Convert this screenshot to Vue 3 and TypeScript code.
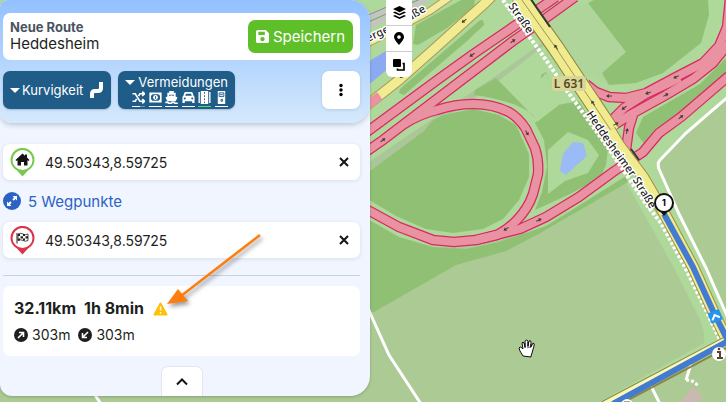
<script setup lang="ts">
import { ref } from 'vue'

interface Avoidance {
  name: string
  icon: string
  active: boolean
}

interface Waypoint {
  id: string
  label: string
  kind: 'start' | 'finish'
  coords: string
}

const avoidances: Avoidance[] = [
  { name: 'shuffle', icon: 'M0 3h3l5 8h4M0 11h3l1.500-2.500M6.500 5.500l1.500-2.500h4M10.500 .8l2.500 2.200-2.500 2.200M10.500 8.800l2.500 2.200-2.500 2.200', active: false },
  { name: 'toll', icon: 'M.8 2.500h11.400v9H.8zM3 2.500L.8 4.700M10 2.500l2.200 2.200M3 11.500L.8 9.300M10 11.500l2.200-2.200', active: false },
  { name: 'ferry', icon: 'M0 12.800q1.600-1.600 3.200 0t3.300 0 3.300 0 3.200 0', active: false },
  { name: 'car', icon: '', active: false },
  { name: 'road', icon: '', active: true },
  { name: 'station', icon: '', active: false },
]

const waypoints = ref<Waypoint[]>([
  { id: 'start', label: 'Start', kind: 'start', coords: '49.50343,8.59725' },
  { id: 'finish', label: 'Ziel', kind: 'finish', coords: '49.50343,8.59725' },
])

const motorways: string[] = [
  'M360 137L440 78 472 55 510 29 556 -3',
  'M360 156L383 140 450 89 513 41 546 18 575 -3',
  'M404 124Q420 114 437 110Q455 104 473 104Q493 104 509 112Q519 118 526 129L535 148Q539 160 538 174L533 194Q528 209 516 221Q508 229 497 235L476 240 454 242 433 240 399 227 366 209',
  'M476 240L520 229 546 217 579 197 613 172 643 152 659 133 681 117 730 75',
  'M586 84L596 92 609 97 626 98 646 93 676 77 703 63 719 46 727 27 730 -2',
  'M603 129L624 108 646 94 680 78',
  'M606 130L630 115 666 95 693 79 713 63 730 42',
  'M633 115L629 128 626 150',
]

const footway = 'M503 0L546 60 568 92 586 117 609 149 646 204 661 223 685 267 706 310 720 340'
const mainRoad = 'M519 -4L546 34 556 48 596 108 612 132'
const mainRoadSouth = 'M610 130L619 145 643 177 664 213 693 267 713 311 727 340'

// x, y and heading of each one-way arrow
const arrows: number[][] = [
  [472, 55, 145], [513, 41, -35], [383, 140, -36], [464, 21, 142], [402, 76, 140],
  [556, 47, 236], [593, 103, 236], [609, 96, 182], [648, 93, 160], [676, 77, 154],
  [624, 108, 145], [616, 124, -28], [666, 95, -28], [681, 117, -38], [627, 131, -80],
  [506, 229, 148], [539, 220, -24], [527, 133, 60],
]
</script>

<template>
  <main class="page">
    <svg class="map" viewBox="0 0 726 402" preserveAspectRatio="xMinYMin slice" role="img" aria-label="Karte">
      <rect width="726" height="402" fill="#abca94" />
      <path d="M0 0H726V97L686 133 658 162 663 178 728 318V345L599 402 704 343Q705 330 699 318L674 268 626 182 546 231 366 260H0Z" fill="#afd89b" />
      <path d="M726 96L686 133 658 162 662 176 706 268 726 313Z" fill="#abca94" />
      <path d="M546 60V20L589 3 626 52 602 73 609 85 560 60Z" fill="#b0d59b" />
      <path d="M366 164L500 73 546 40V44L500 80 366 174Z" fill="#abc79a" />

      <g fill="#90c074">
        <path d="M366 174L424 131 432 121 443 115 473 109 499 115 516 125 529 154 529 177 519 200 503 219 483 229 453 233 426 229 396 216 366 198Z" />
        <path d="M366 218L399 237 433 247 466 249 499 242 546 226 580 205 626 176 628 182 546 230 506 251 456 265 374 312 366 312Z" />
        <path d="M596 -1H708L709 15 701 43 663 73 636 83 609 85 602 73 626 52 588 3Z" />
        <path d="M496 78L537 120Q531 110 510 103Q491 97 474 95L475 90Z" />
        <path d="M399 93L400 89 479 21Q484 18 484 25L467 41 404 95Z" />
        <path d="M413 44L416 25 443 10 463 -1H475L474 7 447 28 418 45Z" />
        <path d="M546 72L558 105 579 101 608 149 606 165 600 178 570 194 535 210 542 192 547 166 544 140 535 123 543 114 541 75Z" />
        <path d="M726 58L700 84 643 117 636 133 645 145 655 134 690 103 726 72Z" />
      </g>
      <path d="M548 150L568 132 588 140 599 155 588 173 565 181 548 194Z" fill="#afd89b" />
      <path d="M537 122L559 105 546 73 524 98Z" fill="#afd89b" />
      <path d="M573 142L583 143 587 156 566 175 560 171 563 154Z" fill="#9abbf5" />
      <path d="M366 63L396 45V62L366 87Z" fill="#8caaf2" />

      <g fill="none">
        <path d="M366 19L399 4 415 -3M366 27L399 13 432 -3" stroke="#c6c4c2" stroke-width="5" />
        <path d="M366 16L410 -3M366 23L425 -3" stroke="#8d8b90" stroke-width="1" />
        <path d="M366 44L400 27 430 11 450 -3" stroke="#b39b58" stroke-width="8" />
        <path d="M366 44L400 27 430 11 450 -3" stroke="#f1ed9e" stroke-width="6" />
        <path d="M366 106L399 80 433 50 464 22 484 4 492 -4" stroke="#ad9751" stroke-width="11" />
        <path d="M366 106L399 80 433 50 464 22 484 4 492 -4" stroke="#f1ec91" stroke-width="9" />
        <path d="M366 106L380 96" stroke="#e892a2" stroke-width="9" />
        <path v-for="(d, i) in motorways" :key="'casing' + i" :d="d" stroke="#d92864" stroke-width="10.500" />
        <path v-for="(d, i) in motorways" :key="'fill' + i" :d="d" stroke="#e993a2" stroke-width="8" />

        <path d="M730 95L686 133 660 160Q657 163 659 169L663 178 679 214 706 268 728 318M366 302L370 313 389 355 421 404M93 392L101 404M691 364L686 380M651 386L660 404" stroke="#fff" stroke-width="3" />
        <path :d="footway" stroke="#fff" stroke-width="4" stroke-dasharray="3 2" />
        <path :d="mainRoad" stroke="#8d813d" stroke-width="17" />
        <path :d="mainRoad" stroke="#f1eb8f" stroke-width="15" />
        <path :d="mainRoad" stroke="#a1954d" stroke-width="1" />
        <path d="M530 -2L550 27" stroke="#37372f" stroke-width="2" />
        <path :d="mainRoadSouth" stroke="#a08e45" stroke-width="12" />
        <path :d="mainRoadSouth" stroke="#f1eb8f" stroke-width="10" />
        <path d="M631 149L639 160" stroke="#37372f" stroke-width="2" />
        <path d="M603 404L728 338" stroke="#8b873e" stroke-width="6" />
        <path d="M603 404L728 338" stroke="#f8f8bd" stroke-width="4" />
        <path d="M613 408L730 346" stroke="#8b873e" stroke-width="2" />
        <path d="M664 214L693 267 713 311 728 341 613 404" stroke="#437bd0" stroke-width="6" />
        <path d="M686 380Q694 380 698 386" stroke="#fff" stroke-width="3" stroke-dasharray="3 2" />
      </g>

      <g v-for="(a, i) in arrows" :key="'arrow' + i" :transform="`translate(${a[0]} ${a[1]}) rotate(${a[2]})`">
        <path d="M-3 0H2" stroke="#4b3b33" stroke-width="1" />
        <path d="M3 0L0 -2V2Z" fill="#4b3b33" />
      </g>

      <path d="M681 402L693 386 703 397 698 402Z" fill="#cbb8b0" />

      <g class="map-label">
        <path id="road-north" d="M508 6L540 51" fill="none" />
        <path id="road-south" d="M586 114L609 148 632 179 662 228" fill="none" />
        <path id="road-west" d="M362 45L400 27 450 -3" fill="none" />
        <text><textPath href="#road-north">Straße</textPath></text>
        <text><textPath href="#road-south">Heddesheimer Straße</textPath></text>
        <text><textPath href="#road-west">berger Straße</textPath></text>
      </g>
      <rect x="552" y="76" width="34" height="15" rx="3" fill="#d9d69a" />
      <text class="road-number" x="569" y="88">L 631</text>

      <g transform="translate(715 316) rotate(-22)">
        <rect x="-6" y="-5" width="12" height="11" fill="#2095f2" />
        <path d="M-4 3L0 -1 4 3" fill="none" stroke="#fff" stroke-width="2" />
      </g>
      <circle cx="719" cy="354" r="7" fill="#fff" />
      <path d="M717 352h3v6m-3 0h6" fill="none" stroke="#5c4035" stroke-width="2" />
      <circle cx="719" cy="349" r="1.300" fill="#5c4035" />
      <circle cx="627" cy="405" r="6" fill="#fff" />
      <path d="M624 402h6" stroke="#5c4035" stroke-width="1" />

      <path d="M664 216L659 210H669Z" fill="#111" />
      <circle cx="664" cy="203" r="9" fill="#fff" stroke="#111" stroke-width="2" />
      <text class="marker-number" x="664" y="206">1</text>

      <path d="M523 356l-3-5-1-3q1-2 3 0l1 1-1-6q1-2 2 0l1 4V341q2-2 3 0v5l1-5q2-1 2 1v5l2-4q2 0 1 3l-2 7-1 3v1Z" fill="#fff" stroke="#111" stroke-width="1" stroke-linejoin="round" />
      <path d="M525 343v5M528 342v6M531 344l-1 4" stroke="#111" stroke-width="1" />
    </svg>

    <div class="overlay">
      <section class="panel">
        <header class="head">
          <div class="title-card">
            <div class="title">
              <strong>Neue Route</strong>
              <span>Heddesheim</span>
            </div>
            <button class="save" type="button">
              <svg width="13" height="13" viewBox="0 0 14 14" aria-hidden="true">
                <path fill-rule="evenodd" d="M2 0h8.500L14 3.500V12q0 2-2 2H2q-2 0-2-2V2q0-2 2-2ZM2.500 2v3.500h7V2ZM7 7.500a2.300 2.300 0 1 0 .01 0Z" fill="#fff" />
              </svg>
              Speichern
            </button>
          </div>
          <div class="tools">
            <button class="tool curves" type="button">
              <span class="caret"></span>
              <span>Kurvigkeit</span>
              <svg width="14" height="18" viewBox="0 0 14 18" aria-hidden="true">
                <path d="M2 17V13Q2 10 5 10H8Q11 10 11 7V1" fill="none" stroke="#fff" stroke-width="4" />
              </svg>
            </button>
            <button class="tool avoid" type="button">
              <span class="avoid-title"><span class="caret"></span>Vermeidungen</span>
              <span class="avoid-icons">
                <span v-for="a in avoidances" :key="a.name" class="avoid-item" :class="{ active: a.active, half: a.name === 'shuffle' }">
                  <svg width="13" height="13" viewBox="0 0 13 14" aria-hidden="true">
                    <path v-if="a.icon" :d="a.icon" fill="none" stroke="#fff" stroke-width="1.800" />
                    <template v-if="a.name === 'toll'">
                      <circle cx="6.500" cy="7" r="2.600" fill="#fff" />
                      <path d="M6.500 5.500v3" stroke="#1f5c87" />
                    </template>
                    <path v-else-if="a.name === 'ferry'" d="M4 0h5v2h2v4l2 1-2 4H2L0 7l2-1V2h2ZM4 4v1.500L6.500 4.500 9 5.500V4Z" fill="#fff" fill-rule="evenodd" />
                    <path v-else-if="a.name === 'car'" d="M3.500 1h6q1 0 1.500 1l1 3q1 .5 1 2v6h-2.500v-2h-8v2H0V7q0-1.500 1-2l1-3q.5-1 1.500-1ZM3.800 3L3 5.200h7L9.200 3ZM2.500 7a1 1 0 1 0 .01 0ZM10.500 7a1 1 0 1 0 .01 0Z" fill="#fff" fill-rule="evenodd" />
                    <g v-else-if="a.name === 'road'">
                      <path d="M0 1h1.500v12H0ZM2.500 0h8v14h-8ZM11.500 1H13v12h-1.500Z" fill="#fff" />
                      <path d="M6.500 1v12" stroke="#1f5c87" stroke-dasharray="2 1.500" />
                    </g>
                    <g v-else-if="a.name === 'station'">
                      <path d="M2.500 0h8v14h-8Z" fill="#fff" />
                      <path d="M4 2h5v4H4ZM5 4h3M6 9h1.500v2H6Z" fill="none" stroke="#1f5c87" />
                    </g>
                  </svg>
                </span>
              </span>
            </button>
            <button class="more" type="button" aria-label="Mehr">
              <svg width="6" height="14" viewBox="0 0 6 14" aria-hidden="true">
                <circle cx="3" cy="2.500" r="1.700" /><circle cx="3" cy="7" r="1.700" /><circle cx="3" cy="11.500" r="1.700" />
              </svg>
            </button>
          </div>
        </header>

        <div class="body">
          <template v-for="(w, i) in waypoints" :key="w.id">
            <div class="waypoint">
              <svg width="25" height="29" viewBox="0 0 25 29" aria-hidden="true">
                <path d="M12.500 28.500L7 22.500A12 12 0 1 1 18 22.500Z" :fill="w.kind === 'start' ? '#79c84f' : '#dc3449'" />
                <circle cx="12.500" cy="12" r="10" fill="#fff" />
                <path v-if="w.kind === 'start'" d="M12.500 5.500L15 7.700V6.500H17V9.500L19.500 12 18.500 13 17.500 12.200V17.500H14V14H11V17.500H7.500V12.200L6.500 13 5.500 12Z" fill="#151515" />
                <g v-else>
                  <path d="M7 7V17.500" stroke="#222" stroke-width="1" />
                  <path d="M8 8Q11 6.500 13 8T18 8V14.500Q15 16 13 14.500T8 14.500Z" fill="#fff" stroke="#222" stroke-width="0.800" />
                  <path d="M8 8h2v2H8ZM13 8h2v2H13ZM10.500 10.200H13V12.500h-2.500ZM15.500 10.200H18V12.500h-2.500ZM8 12.500h2v2H8ZM13 12.500h2v2H13Z" fill="#222" />
                </g>
              </svg>
              <input v-model="w.coords" type="text" :aria-label="w.label" />
              <button class="remove" type="button" :aria-label="w.label + ' entfernen'">
                <svg width="10" height="10" viewBox="0 0 10 10" aria-hidden="true">
                  <path d="M1 1L9 9M9 1L1 9" fill="none" stroke="#151515" stroke-width="2" />
                </svg>
              </button>
            </div>
            <button v-if="i === 0" class="expand" type="button">
              <svg width="18" height="18" viewBox="0 0 18 18" aria-hidden="true">
                <circle cx="9" cy="9" r="9" fill="#2c62c4" />
                <path d="M9.500 4H14V8.500L12.500 7 10.800 8.700 9.300 7.200 11 5.500ZM8.500 14H4V9.500L5.500 11 7.200 9.300 8.700 10.800 7 12.500Z" fill="#fff" />
              </svg>
              5 Wegpunkte
            </button>
          </template>

          <hr />

          <div class="summary">
            <div class="totals">
              <strong>32.11km</strong>
              <strong>1h 8min</strong>
              <svg class="warning" width="15" height="14" viewBox="0 0 15 14" aria-hidden="true">
                <path d="M7.500 1.500L13.500 12.500H1.500Z" fill="#ffc107" stroke="#ffc107" stroke-width="2" stroke-linejoin="round" />
                <path d="M7.500 4.500V8.500M7.500 10V11.500" stroke="#fff" stroke-width="1.500" />
              </svg>
            </div>
            <div class="climbs">
              <span class="climb">
                <svg width="14" height="14" viewBox="0 0 14 14" aria-hidden="true">
                  <circle cx="7" cy="7" r="7" fill="#1d1f21" />
                  <path d="M4 10L9.500 4.500M5 4.500H9.500V9" fill="none" stroke="#fff" stroke-width="1.600" />
                </svg>
                303m
              </span>
              <span class="climb">
                <svg width="14" height="14" viewBox="0 0 14 14" aria-hidden="true">
                  <circle cx="7" cy="7" r="7" fill="#1d1f21" />
                  <path d="M10 4L4.500 9.500M4.500 5V9.500H9" fill="none" stroke="#fff" stroke-width="1.600" />
                </svg>
                303m
              </span>
            </div>
          </div>

          <button class="collapse" type="button" aria-label="Einklappen">
            <svg width="12" height="8" viewBox="0 0 12 8" aria-hidden="true">
              <path d="M1 6.500L6 1.500 11 6.500" fill="none" stroke="#151515" stroke-width="2" />
            </svg>
          </button>
        </div>
      </section>

      <nav class="controls" aria-label="Kartenwerkzeuge">
        <button type="button" aria-label="Ebenen">
          <svg width="13" height="13" viewBox="0 0 14 14" aria-hidden="true">
            <path d="M7 0L14 3.300 7 6.600 0 3.300ZM0 7L2 6 7 8.300 12 6 14 7 7 10.300ZM0 10.700L2 9.700 7 12 12 9.700 14 10.700 7 14Z" />
          </svg>
        </button>
        <button type="button" aria-label="Wegpunkt">
          <svg width="10" height="13" viewBox="0 0 10 13" aria-hidden="true">
            <path fill-rule="evenodd" d="M5 0A5 5 0 0 1 10 5Q10 7.500 5 13Q0 7.500 0 5A5 5 0 0 1 5 0ZM5 3.200A1.800 1.800 0 1 0 5.010 3.200Z" />
          </svg>
        </button>
        <button type="button" aria-label="Kopieren">
          <svg width="12" height="12" viewBox="0 0 12 12" aria-hidden="true">
            <rect width="8" height="8" rx="1" />
            <path d="M9.500 4.500H11V11H4.500V9.500" fill="none" stroke="#000" stroke-width="1.700" />
          </svg>
        </button>
      </nav>
    </div>

    <svg class="pointer" width="106" height="84" viewBox="0 0 106 84" aria-hidden="true">
      <path d="M96 5L17 66" stroke="#ff7d0c" stroke-width="2.500" />
      <path d="M3 74L14 59 18 64 24 71Z" fill="#ff7d0c" />
    </svg>
  </main>
</template>

<style>
body {
  margin: 0;
}
</style>

<style scoped>
.page {
  position: relative;
  display: grid;
  min-height: 100vh;
  overflow: hidden;
  font-family: Inter, "Liberation Sans", sans-serif;
  color: #1d1f21;
}

button,
input {
  box-sizing: border-box;
  margin: 0;
  padding: 0;
  border: 0;
  background: none;
  font: inherit;
  color: inherit;
}

button {
  display: flex;
  align-items: center;
  justify-content: center;
  cursor: pointer;
}

svg {
  flex: none;
}

.map {
  position: absolute;
  inset: 0;
  width: 100%;
  height: 100%;
}

.map-label {
  font: 500 11px "Noto Sans", sans-serif;
  fill: #222;
  stroke: #fff;
  stroke-width: 3px;
  stroke-linejoin: round;
  paint-order: stroke;
}

.map-label path {
  stroke: none;
}

.road-number {
  font: 600 12px "Noto Sans", sans-serif;
  fill: #544a1c;
  text-anchor: middle;
}

.marker-number {
  font: 700 9px Inter, sans-serif;
  text-anchor: middle;
}

.overlay {
  position: relative;
  display: flex;
  align-items: flex-start;
  gap: 16px;
}

.panel {
  flex: 0 1 370px;
  overflow: hidden;
  border-radius: 20px;
  border-top-left-radius: 8px;
  border-bottom-left-radius: 12px;
  background: #f0f5ff;
  box-shadow: 0 1px 3px rgba(0, 0, 0, 0.2);
}

.head {
  display: flex;
  flex-direction: column;
  gap: 11px;
  padding: 13px 10px 14px 3px;
  border-radius: 0 0 20px 12px;
  background: linear-gradient(#92c1ff, #d5e9fc);
  box-shadow: 0 2px 5px rgba(40, 60, 90, 0.25);
}

.title-card {
  display: flex;
  align-items: center;
  justify-content: space-between;
  padding: 7px;
  border-radius: 7px;
  background: #fff;
}

.title {
  display: flex;
  flex-direction: column;
  font-size: 15px;
  line-height: 18px;
}

.title strong {
  font-size: 13px;
  line-height: 15px;
  color: #4a5360;
}

.save {
  gap: 4px;
  height: 33px;
  padding: 0 8px;
  border-radius: 7px;
  background: #5ebf29;
  color: #fff;
  font-size: 15px;
}

.tools {
  display: flex;
  gap: 7px;
}

.tool {
  height: 38px;
  border-radius: 7px;
  background: #1f5c87;
  box-shadow: 0 1px 2px rgba(0, 0, 0, 0.2);
  color: #fff;
  font-size: 13px;
}

.curves {
  gap: 2px;
  padding: 0 7px;
}

.curves svg {
  margin-left: 5px;
}

.avoid {
  flex-direction: column;
  padding: 0 7px;
}

.avoid-title {
  display: flex;
  align-items: center;
  gap: 3px;
  line-height: 17px;
}

.caret {
  border: 5px solid transparent;
  border-top-color: #fff;
  border-bottom-width: 0;
}

.avoid-icons {
  display: flex;
  align-self: stretch;
  justify-content: space-between;
  padding-left: 7px;
}

.avoid-item {
  display: flex;
  padding-bottom: 2px;
  border-bottom: 1px solid #fff;
}

.avoid-item.active {
  border-color: #45df69;
}

.avoid-item.half {
  border-image: linear-gradient(90deg, #fff 60%, #6f96b2 60%) 1;
}

.more {
  width: 38px;
  height: 38px;
  margin-left: auto;
  border-radius: 7px;
  background: #fff;
  box-shadow: 0 1px 3px rgba(40, 60, 90, 0.15);
}

.body {
  display: flex;
  flex-direction: column;
  padding: 21px 10px 0 3px;
}

.waypoint {
  display: flex;
  align-items: center;
  height: 36px;
  padding: 0 0 0 7px;
  border-radius: 7px;
  background: #fff;
  box-shadow: 0 1px 4px rgba(40, 60, 90, 0.12);
}

.waypoint input {
  flex: 1;
  min-width: 0;
  margin-left: 10px;
  font-size: 14px;
}

.remove {
  width: 32px;
  height: 36px;
}

.expand {
  align-self: flex-start;
  gap: 7px;
  height: 42px;
  color: #2c62c4;
  font-size: 15px;
}

hr {
  align-self: stretch;
  height: 1px;
  margin: 17px 0 10px;
  border: 0;
  background: #ccd1da;
}

.summary {
  display: flex;
  flex-direction: column;
  gap: 6px;
  padding: 12px 11px 11px;
  border-radius: 7px;
  background: #fff;
}

.totals,
.climbs {
  display: flex;
  align-items: center;
  gap: 8px;
}

.totals {
  font-size: 16px;
  line-height: 21px;
}

.climb {
  display: flex;
  align-items: center;
  gap: 4px;
  font-size: 14px;
  line-height: 20px;
}

.warning {
  margin-left: 1px;
}

.collapse {
  align-self: center;
  width: 42px;
  height: 30px;
  margin-top: 10px;
  border: 1px solid #e2e6ee;
  border-bottom: 0;
  border-radius: 7px 7px 0 0;
  background: #fff;
}

.controls {
  display: flex;
  flex-direction: column;
  gap: 1px;
  overflow: hidden;
  border-radius: 0 0 6px 6px;
  background: #ccc;
}

.controls button {
  width: 26px;
  height: 25px;
  background: #fff;
}

.pointer {
  position: absolute;
  left: 164px;
  top: 230px;
  filter: drop-shadow(2px 3px 2px rgba(0, 0, 0, 0.4));
}
</style>
